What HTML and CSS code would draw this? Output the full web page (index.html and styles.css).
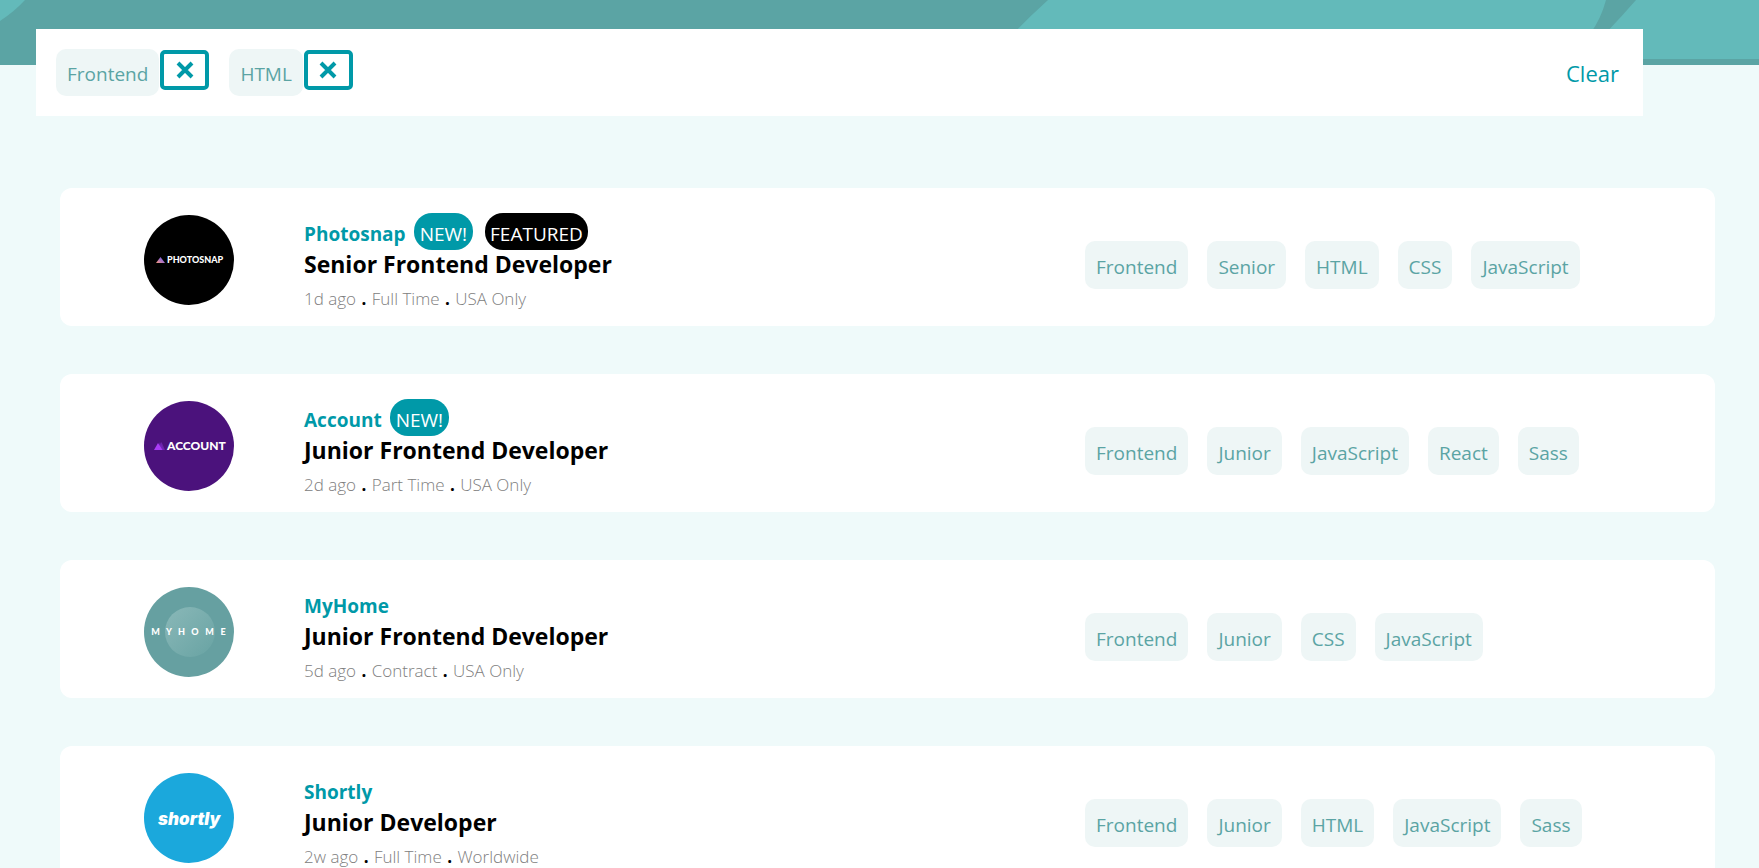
FILE: index.html
```html
<!DOCTYPE html>
<html lang="en">
<head>
<meta charset="utf-8">
<title>Job listings</title>
<link rel="stylesheet" href="styles.css">
</head>
<body>
<header class="banner">
  <svg class="banner-art" viewBox="0 0 1759 65" preserveAspectRatio="none" aria-hidden="true">
    <path d="M0 0H25Q15 11 0 21Z"/>
    <path d="M1048 0H1606Q1601 19 1590 34L1588 59H990Q1019 26 1048 0Z"/>
    <path d="M1636 0H1759V59H1580Q1608 32 1636 0Z"/>
  </svg>
</header>
<main>
  <section class="filters" aria-label="Active filters">
    <ul class="filter-list">
      <li class="filter"><span class="tag">Frontend</span><button class="remove" type="button" aria-label="Remove Frontend"><svg viewBox="0 0 18 18" aria-hidden="true"><path d="M2 2L16 16M16 2L2 16"/></svg></button></li>
      <li class="filter"><span class="tag">HTML</span><button class="remove" type="button" aria-label="Remove HTML"><svg viewBox="0 0 18 18" aria-hidden="true"><path d="M2 2L16 16M16 2L2 16"/></svg></button></li>
    </ul>
    <button class="clear" type="button">Clear</button>
  </section>
  <section class="jobs" aria-label="Jobs">
    <article class="card">
      <svg class="logo" viewBox="0 0 90 90" role="img" aria-label="Photosnap logo">
        <defs><linearGradient id="ps" x1="0" y1="1" x2="1" y2="0"><stop offset="0" stop-color="#fb9a76"/><stop offset=".5" stop-color="#a873c8"/><stop offset="1" stop-color="#4a50d8"/></linearGradient></defs>
        <circle cx="45" cy="45" r="45" fill="#000"/>
        <path d="M12 48L16.500 42L21 48Z" fill="url(#ps)"/>
        <text class="mark mark-photosnap" x="23" y="48">PHOTOSNAP</text>
      </svg>
      <div class="info">
        <div class="company"><span class="name">Photosnap</span><span class="pill new">NEW!</span><span class="pill featured">FEATURED</span></div>
        <h2 class="title">Senior Frontend Developer</h2>
        <p class="meta"><span>1d ago</span> <b>.</b> <span>Full Time</span> <b>.</b> <span>USA Only</span></p>
      </div>
      <div class="tags"><button type="button" class="tag">Frontend</button><button type="button" class="tag">Senior</button><button type="button" class="tag">HTML</button><button type="button" class="tag">CSS</button><button type="button" class="tag">JavaScript</button></div>
    </article>
    <article class="card">
      <svg class="logo" viewBox="0 0 90 90" role="img" aria-label="Account logo">
        <circle cx="45" cy="45" r="45" fill="#4b127c"/>
        <path d="M14 49L17.500 41L21 49Z" fill="#7a2bbd" opacity=".7"/>
        <path d="M12 49L16 41L20 49Z" fill="#7328bd" opacity=".6"/>
        <path d="M10 49L14 42L18.500 49Z" fill="#a93cf5"/>
        <text class="mark mark-account" x="23" y="49">ACCOUNT</text>
      </svg>
      <div class="info">
        <div class="company"><span class="name">Account</span><span class="pill new">NEW!</span></div>
        <h2 class="title">Junior Frontend Developer</h2>
        <p class="meta"><span>2d ago</span> <b>.</b> <span>Part Time</span> <b>.</b> <span>USA Only</span></p>
      </div>
      <div class="tags"><button type="button" class="tag">Frontend</button><button type="button" class="tag">Junior</button><button type="button" class="tag">JavaScript</button><button type="button" class="tag">React</button><button type="button" class="tag">Sass</button></div>
    </article>
    <article class="card">
      <svg class="logo" viewBox="0 0 90 90" role="img" aria-label="MyHome logo">
        <defs><linearGradient id="mh" x1="0" y1="0" x2="1" y2="1"><stop offset="0" stop-color="#8ab8b8"/><stop offset="1" stop-color="#68a3a3"/></linearGradient></defs>
        <circle cx="45" cy="45" r="45" fill="#66a0a1"/>
        <circle cx="46" cy="45" r="25" fill="url(#mh)"/>
        <g class="mark mark-myhome"><text x="11.500" y="48">M</text><text x="25" y="48">Y</text><text x="37.500" y="48">H</text><text x="51" y="48">O</text><text x="65.500" y="48">M</text><text x="79" y="48">E</text></g>
      </svg>
      <div class="info">
        <div class="company"><span class="name">MyHome</span></div>
        <h2 class="title">Junior Frontend Developer</h2>
        <p class="meta"><span>5d ago</span> <b>.</b> <span>Contract</span> <b>.</b> <span>USA Only</span></p>
      </div>
      <div class="tags"><button type="button" class="tag">Frontend</button><button type="button" class="tag">Junior</button><button type="button" class="tag">CSS</button><button type="button" class="tag">JavaScript</button></div>
    </article>
    <article class="card">
      <svg class="logo" viewBox="0 0 90 90" role="img" aria-label="Shortly logo">
        <circle cx="45" cy="45" r="45" fill="#1ba8dc"/>
        <text class="mark mark-shortly" x="14" y="52">shortly</text>
      </svg>
      <div class="info">
        <div class="company"><span class="name">Shortly</span></div>
        <h2 class="title">Junior Developer</h2>
        <p class="meta"><span>2w ago</span> <b>.</b> <span>Full Time</span> <b>.</b> <span>Worldwide</span></p>
      </div>
      <div class="tags"><button type="button" class="tag">Frontend</button><button type="button" class="tag">Junior</button><button type="button" class="tag">HTML</button><button type="button" class="tag">JavaScript</button><button type="button" class="tag">Sass</button></div>
    </article>
  </section>
</main>
</body>
</html>
```
FILE: styles.css
```css
* { box-sizing: border-box; }

body {
  margin: 0;
  background: #effafa;
  font-family: "Open Sans", "Noto Sans", sans-serif;
  font-size: 19px;
  color: #000;
}

/* The page scrolls without a visible scrollbar. */
html { scrollbar-width: none; }

button { font: inherit; border: 0; cursor: pointer; }

.banner { height: 65px; background: #5ba4a4; }

.banner-art { display: block; width: 100%; height: 100%; fill: #63baba; }

.filters {
  position: relative;
  display: flex;
  align-items: center;
  justify-content: space-between;
  margin: -36px 116px 0 36px;
  padding: 20px;
  background: #fff;
}

.filter-list {
  display: flex;
  gap: 20px;
  margin: 0;
  padding: 0;
  list-style: none;
}

.filter { display: flex; align-items: flex-start; gap: 1px; }

.tag {
  padding: 12px 11px 8px;
  border-radius: 10px;
  background: #eef6f6;
  color: #5ba4a4;
  line-height: 28px;
}

.filter .tag { padding-top: 11px; }

.remove {
  display: flex;
  align-items: center;
  justify-content: center;
  width: 49px;
  height: 40px;
  margin-top: 1px;
  padding: 0;
  border: 4px solid #0099a8;
  border-radius: 5px;
  background: #fff;
}

.remove svg { width: 18px; height: 18px; stroke: #0099a8; stroke-width: 4; }

.clear {
  padding: 5px 4px;
  background: none;
  color: #0099a8;
  font-size: 22px;
  line-height: 28px;
}

.jobs {
  display: flex;
  flex-direction: column;
  gap: 48px;
  padding: 72px 44px 48px 60px;
}

.card {
  display: grid;
  grid-template-columns: 90px 1fr 562px;
  column-gap: 70px;
  align-items: start;
  padding: 25px 68px 15px 84px;
  border-radius: 12px;
  background: #fff;
}

.logo { width: 90px; height: 90px; margin-top: 2px; }

.mark { fill: #fff; font-family: Lato, sans-serif; font-weight: 900; }
.mark-photosnap { font-size: 9px; }
.mark-account { font-size: 12px; }
.mark-myhome { font-size: 9px; text-anchor: middle; }
.mark-shortly { font-family: Inter, sans-serif; font-size: 17px; font-style: italic; }

.company { display: flex; align-items: flex-start; height: 37px; }

.name {
  margin-right: 8px;
  padding-top: 7px;
  color: #0099a8;
  font-weight: 700;
  line-height: 28px;
}

.pill {
  margin-right: 12px;
  padding: 7px 5px 2px;
  border-radius: 18px;
  color: #fff;
  line-height: 28px;
}

.new { padding-right: 6px; padding-left: 6px; background: #0099a8; }
.featured { background: #000; }

.title { margin: 0; font-size: 23px; font-weight: 700; line-height: 28px; }

.meta { margin: 9px 0 0; font-size: 17px; line-height: 24px; }
.meta span { color: #808080; font-weight: 300; }
.meta b { padding: 0 1px; }

.tags { display: flex; gap: 19px; padding-top: 28px; }
```
